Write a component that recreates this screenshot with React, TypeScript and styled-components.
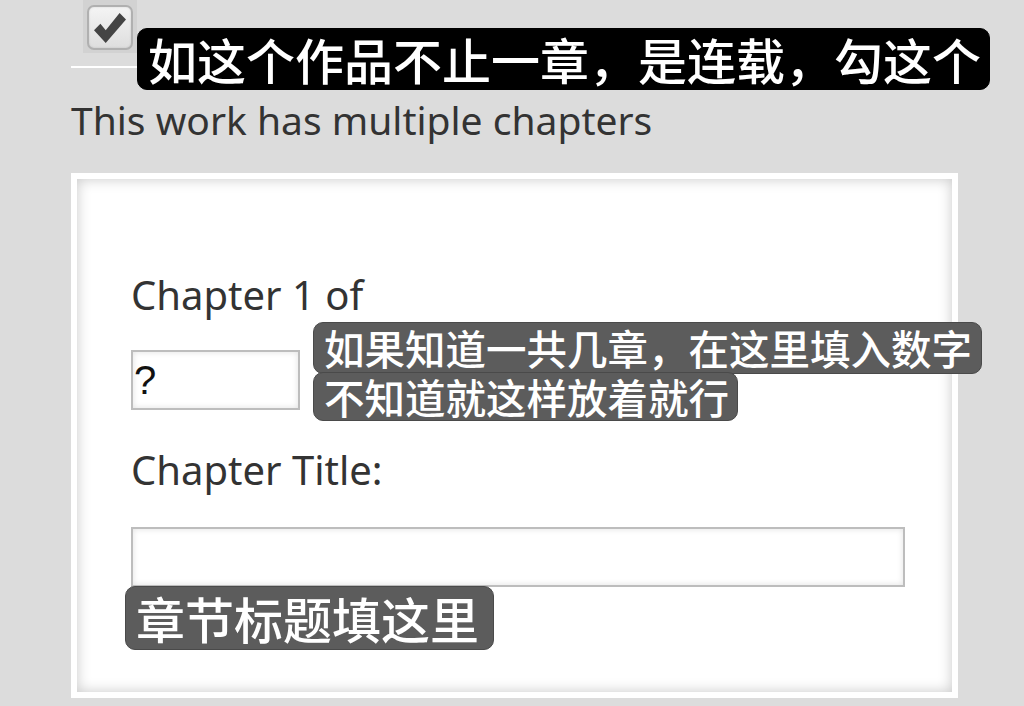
import React from "react";
import styled, { createGlobalStyle } from "styled-components";

const Global = createGlobalStyle`
  html, body { margin: 0; padding: 0; background: #dcdcdc; }
  body { width: 1024px; height: 706px; overflow: hidden; font-family: "Noto Sans", "Liberation Sans", sans-serif; }
`;

const Page = styled.div`
  position: relative;
  width: 1024px;
  height: 706px;
  box-sizing: border-box;
  padding: 0 66px 0 71px;
  background: #dcdcdc;
`;

const CheckRow = styled.div`
  display: flex;
  height: 53px;
  padding-left: 12px;
`;

const CheckCell = styled.div`
  width: 54px;
  height: 53px;
  background: #d2d2d2;
  display: flex;
  align-items: flex-start;
  justify-content: center;
  padding-top: 5px;
  box-sizing: border-box;
`;

const CheckBox = styled.span`
  width: 46px;
  height: 45px;
  box-sizing: border-box;
  border: 2px solid #b0b0b0;
  border-radius: 7px;
  background: linear-gradient(#f4f4f4, #dedede);
  box-shadow: inset 0 0 2px rgba(0, 0, 0, 0.15);
  display: flex;
  align-items: center;
  justify-content: center;
`;

const Rule = styled.div`
  height: 2px;
  background: #ffffff;
  margin-top: 13px;
  width: 80px;
`;

const Description = styled.p`
  margin: 27px 0 0 0;
  font-size: 39px;
  line-height: 50px;
  color: #333;
`;

const Fieldset = styled.div`
  margin-top: 28px;
  width: 887px;
  height: 525px;
  box-sizing: border-box;
  border: 6px solid #ffffff;
  background: #ffffff;
  box-shadow: inset 0 0 14px rgba(0, 0, 0, 0.22);
  padding: 91px 0 0 54px;
  display: flex;
  flex-direction: column;
  align-items: flex-start;
`;

const Label = styled.div<{ $mt?: number }>`
  font-size: 40px;
  line-height: 50px;
  color: #333;
  margin-top: ${(p) => p.$mt ?? 0}px;
`;

const TextBox = styled.div<{ $w: number; $mt: number }>`
  width: ${(p) => p.$w}px;
  height: 60px;
  margin-top: ${(p) => p.$mt}px;
  box-sizing: border-box;
  border: 2px solid #bdbdbd;
  background: #fff;
  box-shadow: inset 0 0 6px rgba(0, 0, 0, 0.12);
  font-family: "Liberation Sans", sans-serif;
  font-size: 40px;
  line-height: 56px;
  color: #111;
  padding-left: 1px;
`;

const Note = styled.div<{ $x: number; $y: number; $w: number; $h: number; $fs: number; $dark?: boolean }>`
  position: absolute;
  left: ${(p) => p.$x}px;
  top: ${(p) => p.$y}px;
  width: ${(p) => p.$w}px;
  height: ${(p) => p.$h}px;
  box-sizing: border-box;
  border-radius: 10px;
  background: ${(p) => (p.$dark ? "#000" : "#5c5c5c")};
  border: 1px solid ${(p) => (p.$dark ? "#000" : "#4a4a4a")};
  color: #fff;
  font-family: "Noto Sans CJK SC", sans-serif;
  font-weight: 500;
  font-size: ${(p) => p.$fs}px;
  line-height: ${(p) => p.$h - 2}px;
  padding-left: 10px;
  white-space: nowrap;
`;

export default function App() {
  return (
    <>
      <Global />
      <Page>
        <CheckRow>
          <CheckCell>
            <CheckBox>
              <svg width="32" height="32" viewBox="0 0 30 30">
                <path d="M0 17 L6 11 L11 17 L24 1 L30 7 L11 29 Z" fill="#444" />
              </svg>
            </CheckBox>
          </CheckCell>
        </CheckRow>
        <Rule />
        <Description>This work has multiple chapters</Description>
        <Fieldset>
          <Label>Chapter 1 of</Label>
          <TextBox $w={169} $mt={30}>?</TextBox>
          <Label $mt={35}>Chapter Title:</Label>
          <TextBox $w={774} $mt={32} />
        </Fieldset>
        <Note $dark $x={137} $y={28} $w={853} $h={62} $fs={49}>
          如这个作品不止一章，是连载，勾这个
        </Note>
        <Note $x={313} $y={322} $w={669} $h={52} $fs={40.5}>
          如果知道一共几章，在这里填入数字
        </Note>
        <Note $x={313} $y={372} $w={425} $h={49} $fs={40.5}>
          不知道就这样放着就行
        </Note>
        <Note $x={125} $y={586} $w={369} $h={64} $fs={49}>
          章节标题填这里
        </Note>
      </Page>
    </>
  );
}
